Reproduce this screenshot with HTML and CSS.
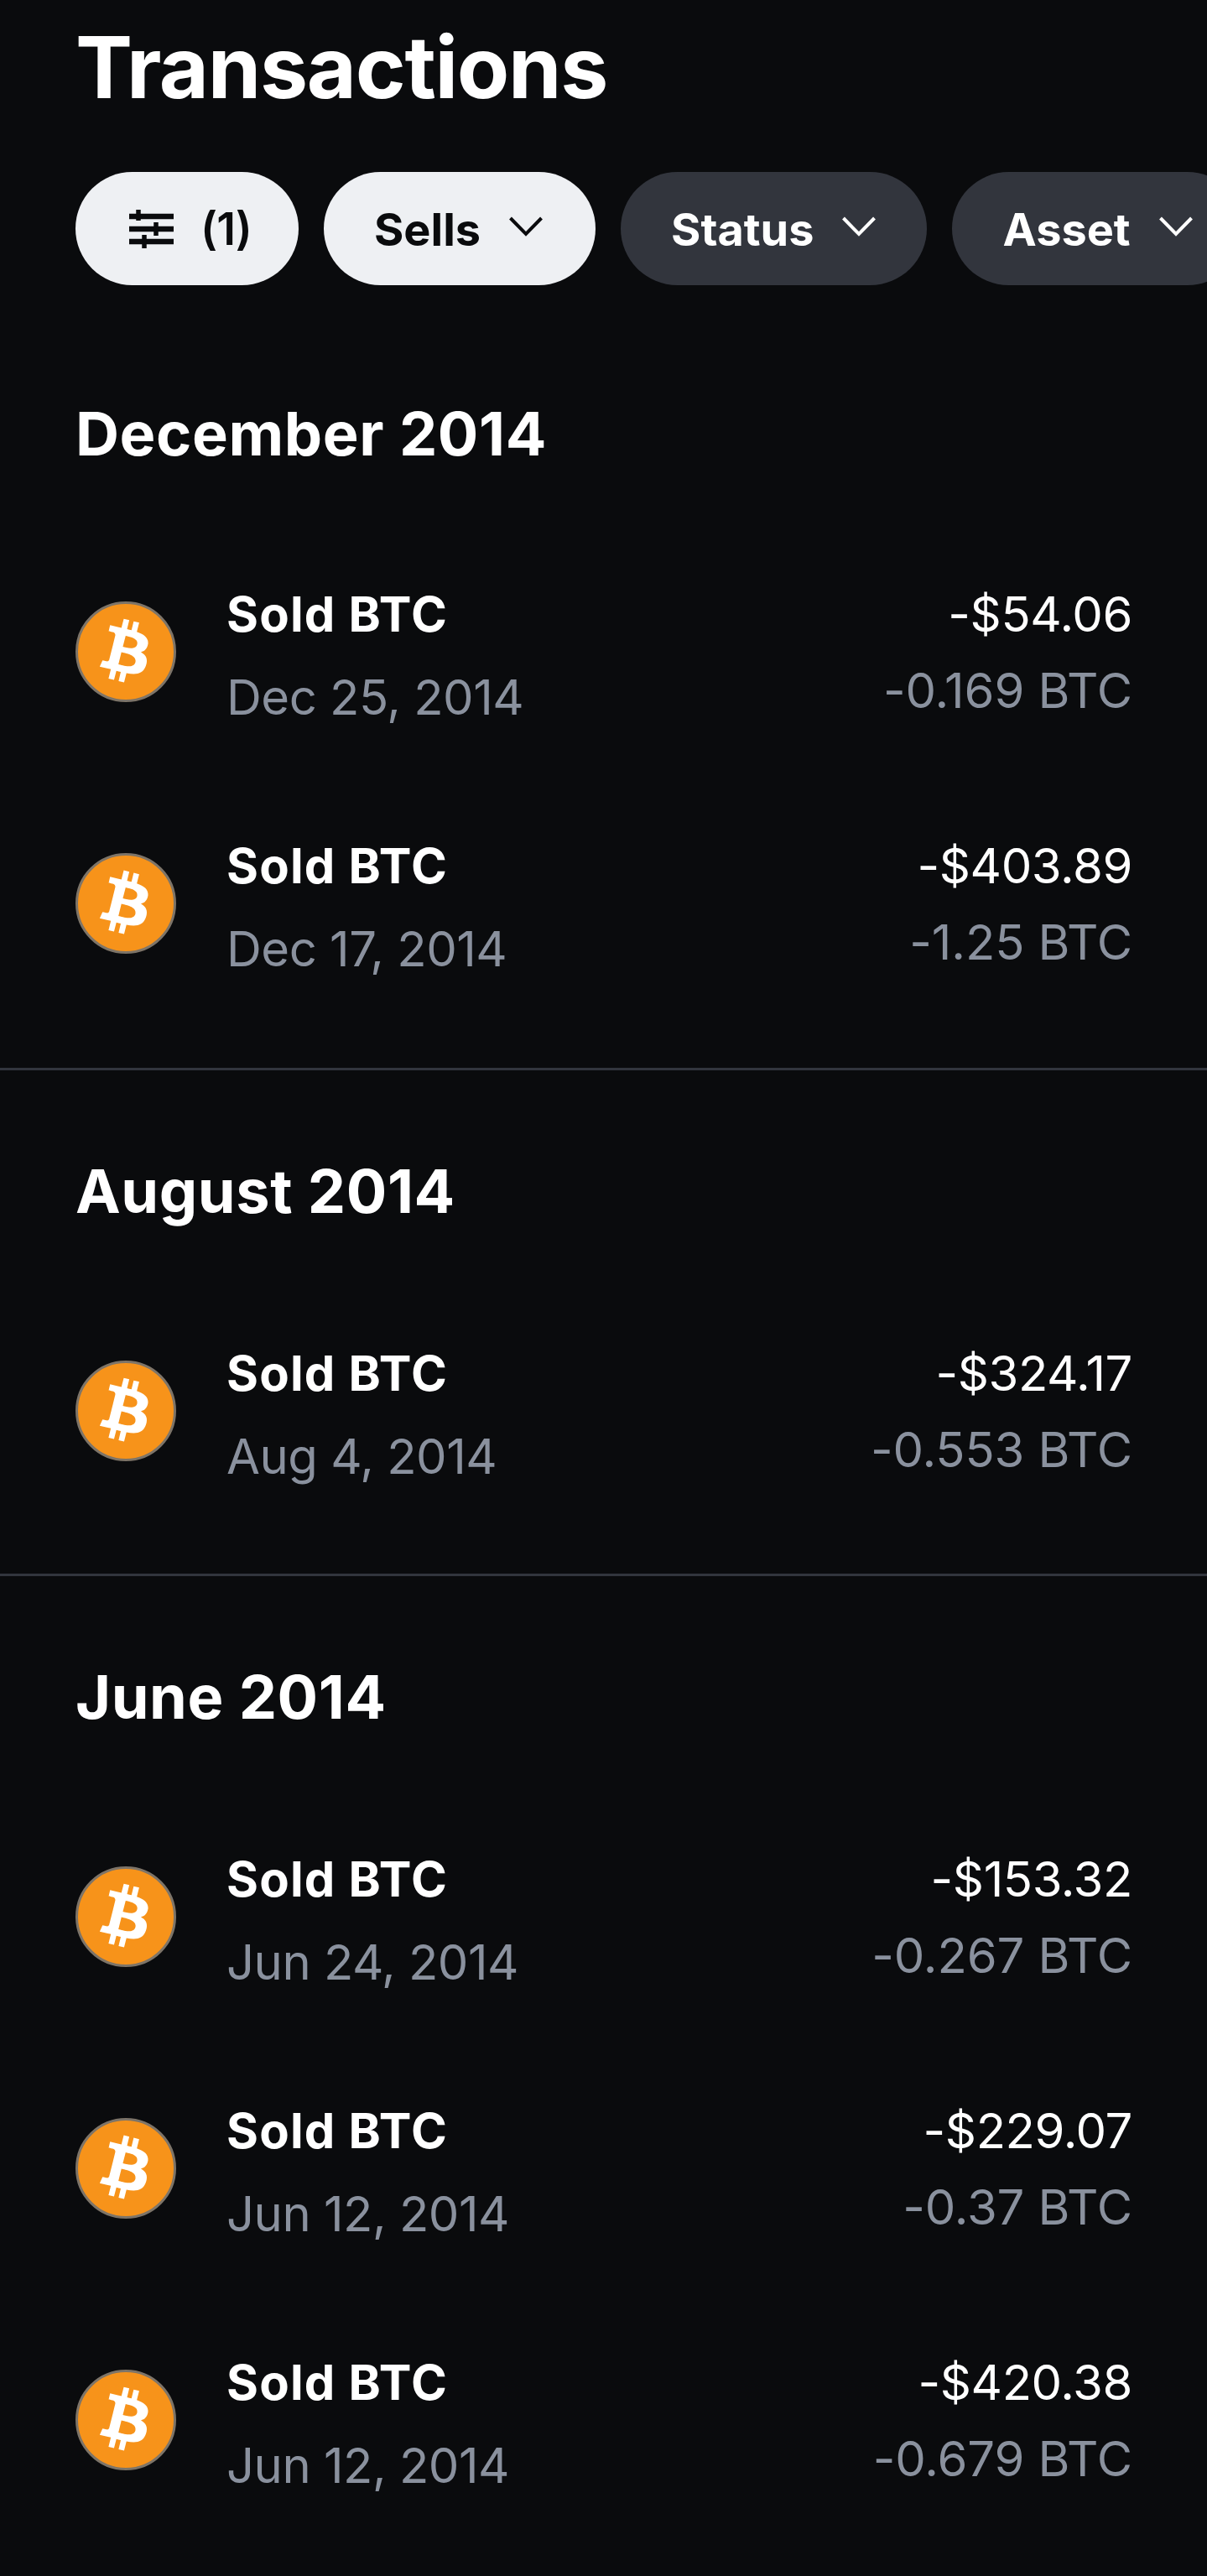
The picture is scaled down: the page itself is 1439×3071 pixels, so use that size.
FILE: index.html
```html
<!DOCTYPE html>
<html lang="en">
<head>
<meta charset="utf-8">
<title>Transactions</title>
<link rel="stylesheet" href="styles.css">
</head>
<body>
<svg class="defs" width="0" height="0" aria-hidden="true">
  <symbol id="btc" viewBox="0 0 120 120">
    <circle cx="60" cy="60" r="58.5" fill="#f7931a" stroke="#7d7468" stroke-width="3"/>
    <path transform="scale(1.875)" fill="#fff" d="M46.1 27.4c.6-4.3-2.6-6.6-7.1-8.1l1.5-5.8-3.5-.9-1.4 5.7c-.9-.2-1.9-.4-2.8-.7l1.4-5.7-3.5-.9-1.5 5.8c-.8-.2-1.5-.4-2.3-.5l-4.9-1.2-.9 3.8s2.6.6 2.6.6c1.4.4 1.7 1.3 1.6 2.1l-1.6 6.5c.1 0 .2.1.4.1l-.4-.1-2.3 9.1c-.2.4-.6 1.1-1.6.8 0 0-2.6-.6-2.6-.6l-1.8 4 4.6 1.1c.9.2 1.7.4 2.5.6l-1.5 5.9 3.5.9 1.5-5.8c1 .3 1.9.5 2.8.7l-1.4 5.8 3.5.9 1.5-5.9c6 1.1 10.5.7 12.4-4.8 1.5-4.4-.1-6.9-3.2-8.6 2.3-.5 4-2 4.5-5.1zm-8 11.2c-1.1 4.4-8.4 2-10.8 1.4l1.9-7.7c2.4.6 10 1.8 8.9 6.3zm1.1-11.3c-1 4-7.1 2-9.1 1.5l1.8-7c2 .5 8.3 1.4 7.3 5.5z"/>
  </symbol>
  <symbol id="chev" viewBox="0 0 40 24">
    <path d="M1.5 2 20 21 38.500 2" fill="none" stroke="currentColor" stroke-width="4"/>
  </symbol>
</svg>
<main class="page">
  <h1 class="title">Transactions</h1>
  <div class="filters">
    <button class="pill light icon-pill">
      <svg class="sliders" viewBox="0 0 53 46" aria-hidden="true">
        <path d="M0 8h53M0 23h53M0 38h53" stroke="currentColor" stroke-width="6.500" fill="none"/>
        <path d="M11 0v13M32 15v16M18 30v16" stroke="currentColor" stroke-width="5.500" fill="none"/>
      </svg>
      <span>(1)</span>
    </button>
    <button class="pill light"><span>Sells</span><svg class="chev"><use href="#chev"/></svg></button>
    <button class="pill dark"><span>Status</span><svg class="chev"><use href="#chev"/></svg></button>
    <button class="pill dark"><span>Asset</span><svg class="chev"><use href="#chev"/></svg></button>
  </div>

  <section class="month first">
    <h2 class="month-name">December 2014</h2>
    <div class="row">
      <svg class="coin"><use href="#btc"/></svg>
      <div class="info"><div class="name">Sold BTC</div><div class="date">Dec 25, 2014</div></div>
      <div class="amounts"><div class="fiat">-$54.06</div><div class="crypto">-0.169 BTC</div></div>
    </div>
    <div class="row">
      <svg class="coin"><use href="#btc"/></svg>
      <div class="info"><div class="name">Sold BTC</div><div class="date">Dec 17, 2014</div></div>
      <div class="amounts"><div class="fiat">-$403.89</div><div class="crypto">-1.25 BTC</div></div>
    </div>
  </section>

  <section class="month">
    <h2 class="month-name">August 2014</h2>
    <div class="row">
      <svg class="coin"><use href="#btc"/></svg>
      <div class="info"><div class="name">Sold BTC</div><div class="date">Aug 4, 2014</div></div>
      <div class="amounts"><div class="fiat">-$324.17</div><div class="crypto">-0.553 BTC</div></div>
    </div>
  </section>

  <section class="month">
    <h2 class="month-name">June 2014</h2>
    <div class="row">
      <svg class="coin"><use href="#btc"/></svg>
      <div class="info"><div class="name">Sold BTC</div><div class="date">Jun 24, 2014</div></div>
      <div class="amounts"><div class="fiat">-$153.32</div><div class="crypto">-0.267 BTC</div></div>
    </div>
    <div class="row">
      <svg class="coin"><use href="#btc"/></svg>
      <div class="info"><div class="name">Sold BTC</div><div class="date">Jun 12, 2014</div></div>
      <div class="amounts"><div class="fiat">-$229.07</div><div class="crypto">-0.37 BTC</div></div>
    </div>
    <div class="row">
      <svg class="coin"><use href="#btc"/></svg>
      <div class="info"><div class="name">Sold BTC</div><div class="date">Jun 12, 2014</div></div>
      <div class="amounts"><div class="fiat">-$420.38</div><div class="crypto">-0.679 BTC</div></div>
    </div>
  </section>
</main>
</body>
</html>
```

FILE: styles.css
```css
* { box-sizing: border-box; }
html, body { margin: 0; padding: 0; background: #0a0b0d; }
body { font-family: Inter, "Liberation Sans", sans-serif; color: #fff; }
.defs { position: absolute; }
.page { width: 1439px; height: 3071px; overflow: hidden; }

.title {
  margin: 0;
  padding: 20px 0 0 90px;
  height: 205px;
  font-size: 102px;
  line-height: 120px;
  font-weight: 700;
  letter-spacing: -1.3px;
}

.filters { display: flex; gap: 30px; height: 135px; padding-left: 90px; width: 1600px; margin-bottom: 33px; }
.pill {
  display: flex;
  align-items: center;
  gap: 34px;
  height: 135px;
  padding: 2px 63px 0 60px;
  border: 0;
  border-radius: 68px;
  font-family: inherit;
  font-size: 54px;
  font-weight: 700;
  letter-spacing: 0;
  flex: none;
}
.pill.light { background: #eef0f3; color: #0a0b0d; }
.pill.dark { background: #32353d; color: #fff; padding-right: 61px; }
.pill.icon-pill { width: 266px; padding: 0 0 0 64px; gap: 32px; font-weight: 600; letter-spacing: -1px; }
.sliders { width: 53px; height: 46px; }
.chev { width: 40px; height: 24px; margin-top: -8px; }

.month { padding-top: 84px; border-bottom: 3px solid #32353d; padding-bottom: 44px; }
.month.first { padding-bottom: 46px; }
.month:last-child { border-bottom: 0; }
.month-name {
  margin: 0 0 52px;
  padding-left: 90px;
  font-size: 72px;
  line-height: 120px;
  font-weight: 700;
  letter-spacing: 0.6px;
}
.month.first .month-name { margin-bottom: 50px; }

.row { display: flex; align-items: center; height: 300px; padding: 0 89px 0 90px; gap: 60px; }
.coin { width: 120px; height: 120px; flex: none; }
.info { flex: 1; }
.name { font-size: 58px; line-height: 108px; font-weight: 700; letter-spacing: 1.2px; }
.date { font-size: 58px; line-height: 90px; color: #8a919e; letter-spacing: -0.5px; }
.amounts { text-align: right; }
.fiat { font-size: 58px; line-height: 92px; letter-spacing: -0.4px; }
.crypto { font-size: 58px; line-height: 90px; color: #8a919e; letter-spacing: -0.1px; }
```
